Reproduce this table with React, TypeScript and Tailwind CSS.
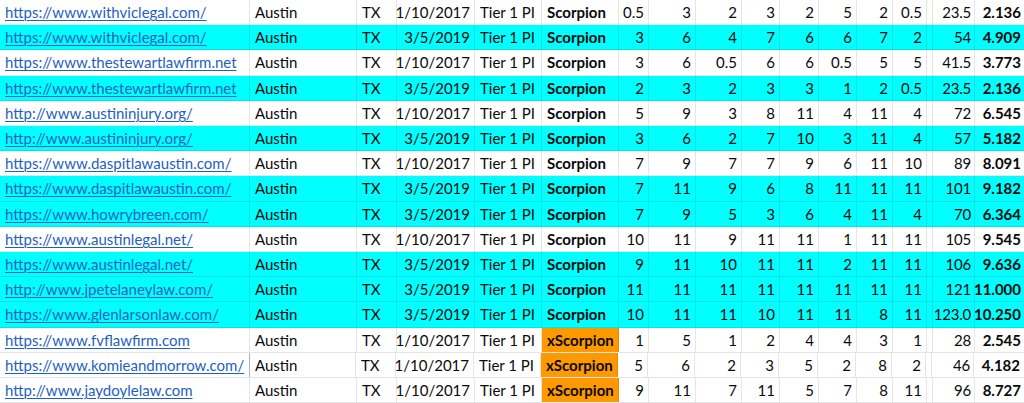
import React from "react";

type Row = {
  url: string;
  date: string;
  plan: string;
  scores: string[];
  total: string;
  avg: string;
  fill: "white" | "cyan";
};

const rows: Row[] = [
  { url: "https://www.withviclegal.com/", date: "1/10/2017", plan: "Scorpion", scores: ["0.5", "3", "2", "3", "2", "5", "2", "0.5"], total: "23.5", avg: "2.136", fill: "white" },
  { url: "https://www.withviclegal.com/", date: "3/5/2019", plan: "Scorpion", scores: ["3", "6", "4", "7", "6", "6", "7", "2"], total: "54", avg: "4.909", fill: "cyan" },
  { url: "https://www.thestewartlawfirm.net", date: "1/10/2017", plan: "Scorpion", scores: ["3", "6", "0.5", "6", "6", "0.5", "5", "5"], total: "41.5", avg: "3.773", fill: "white" },
  { url: "https://www.thestewartlawfirm.net", date: "3/5/2019", plan: "Scorpion", scores: ["2", "3", "2", "3", "3", "1", "2", "0.5"], total: "23.5", avg: "2.136", fill: "cyan" },
  { url: "http://www.austininjury.org/", date: "1/10/2017", plan: "Scorpion", scores: ["5", "9", "3", "8", "11", "4", "11", "4"], total: "72", avg: "6.545", fill: "white" },
  { url: "http://www.austininjury.org/", date: "3/5/2019", plan: "Scorpion", scores: ["3", "6", "2", "7", "10", "3", "11", "4"], total: "57", avg: "5.182", fill: "cyan" },
  { url: "https://www.daspitlawaustin.com/", date: "1/10/2017", plan: "Scorpion", scores: ["7", "9", "7", "7", "9", "6", "11", "10"], total: "89", avg: "8.091", fill: "white" },
  { url: "https://www.daspitlawaustin.com/", date: "3/5/2019", plan: "Scorpion", scores: ["7", "11", "9", "6", "8", "11", "11", "11"], total: "101", avg: "9.182", fill: "cyan" },
  { url: "https://www.howrybreen.com/", date: "3/5/2019", plan: "Scorpion", scores: ["7", "9", "5", "3", "6", "4", "11", "4"], total: "70", avg: "6.364", fill: "cyan" },
  { url: "https://www.austinlegal.net/", date: "1/10/2017", plan: "Scorpion", scores: ["10", "11", "9", "11", "11", "1", "11", "11"], total: "105", avg: "9.545", fill: "white" },
  { url: "https://www.austinlegal.net/", date: "3/5/2019", plan: "Scorpion", scores: ["9", "11", "10", "11", "11", "2", "11", "11"], total: "106", avg: "9.636", fill: "cyan" },
  { url: "http://www.jpetelaneylaw.com/", date: "3/5/2019", plan: "Scorpion", scores: ["11", "11", "11", "11", "11", "11", "11", "11"], total: "121", avg: "11.000", fill: "cyan" },
  { url: "https://www.glenlarsonlaw.com/", date: "3/5/2019", plan: "Scorpion", scores: ["10", "11", "11", "10", "11", "11", "8", "11"], total: "123.0", avg: "10.250", fill: "cyan" },
  { url: "https://www.fvflawfirm.com", date: "1/10/2017", plan: "xScorpion", scores: ["1", "5", "1", "2", "4", "4", "3", "1"], total: "28", avg: "2.545", fill: "white" },
  { url: "https://www.komieandmorrow.com/", date: "1/10/2017", plan: "xScorpion", scores: ["5", "6", "2", "3", "5", "2", "8", "2"], total: "46", avg: "4.182", fill: "white" },
  { url: "http://www.jaydoylelaw.com", date: "1/10/2017", plan: "xScorpion", scores: ["9", "11", "7", "11", "5", "7", "8", "11"], total: "96", avg: "8.727", fill: "white" },
];

// widths of the score columns G..N
const scoreWidths = ["w-[30px]", "w-[47px]", "w-[46px]", "w-[38px]", "w-[39px]", "w-[38px]", "w-[36px]", "w-[34px]"];

const cell = "flex h-full shrink-0 items-center border-r border-black/[0.1] whitespace-nowrap";

const App = () => {
  return (
    <div
      className="h-[403px] w-[1024px] overflow-hidden bg-white text-[15px] text-[#0a0a0a]"
      style={{ fontFamily: "Lato, 'Open Sans', sans-serif" }}
    >
      {rows.map((row, i) => (
        <div
          key={i}
          className={`flex border-b border-black/[0.1] ${i % 5 === 2 ? "h-[26px]" : "h-[25px]"} ${
            row.fill === "cyan" ? "bg-[#00ffff]" : "bg-white"
          }`}
        >
          <div className={`${cell} w-[250px] pl-[5px]`}>
            <span className="text-[#1f5fc4] underline decoration-1 underline-offset-2">{row.url}</span>
          </div>
          <div className={`${cell} w-[107px] pl-[5px] ${i === 14 ? "border-l border-l-[#9fb4e0] -ml-px" : ""}`}>
            Austin
          </div>
          <div className={`${cell} w-[40px] pl-[5px]`}>TX</div>
          <div className={`${cell} w-[78px] justify-end pr-[4px]`}>{row.date}</div>
          <div className={`${cell} w-[67px] pl-[5px]`}>Tier 1 PI</div>
          <div
            className={`${cell} w-[77px] pl-[5px] font-bold ${row.plan === "xScorpion" ? "bg-[#ff9900]" : ""}`}
          >
            {row.plan}
          </div>
          {row.scores.map((s, j) => (
            <div key={j} className={`${cell} ${scoreWidths[j]} justify-end pr-[4px]`}>
              {s}
            </div>
          ))}
          <div className={`${cell} w-[6px]`} />
          <div className={`${cell} w-[42px] justify-end pr-[3px] tracking-[-0.2px]`}>{row.total}</div>
          <div className={`${cell} w-[49px] justify-end pr-[3px] font-bold border-r-0`}>{row.avg}</div>
        </div>
      ))}
    </div>
  );
};

export default App;
